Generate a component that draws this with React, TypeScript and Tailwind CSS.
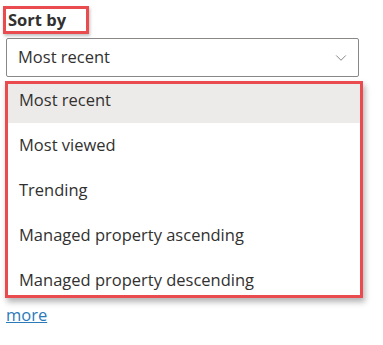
import { ChevronDown } from "lucide-react";

const options = [
  "Most recent",
  "Most viewed",
  "Trending",
  "Managed property ascending",
  "Managed property descending",
];

export default function App() {
  return (
    <div className="w-[383px] h-[345px] bg-white font-['Open_Sans',sans-serif] text-[#323130] pt-[6px] pl-[3px]">
      {/* label with annotation box */}
      <div className="w-[86px] h-[28px] border-[3px] border-[#e94b4f] shadow-[1px_2px_3px_rgba(0,0,0,0.25)] pl-[2px] flex items-center">
        <span className="text-[16.5px] font-bold leading-none text-[#323130]">Sort by</span>
      </div>

      {/* select box */}
      <div className="ml-[3px] mt-[4px] w-[353px] h-[39px] border border-[#8a8886] rounded-[2px] flex items-center justify-between pl-[11px] pr-[8px]">
        <span className="text-[16.5px]">Most recent</span>
        <ChevronDown size={18} strokeWidth={1} className="text-[#605e5c]" />
      </div>

      {/* dropdown options with annotation box */}
      <div className="ml-[2px] mt-[4px] w-[358px] h-[217px] border-[3px] border-[#e94b4f] overflow-hidden shadow-[2px_4px_6px_rgba(0,0,0,0.3)]">
        <div className="-mt-[6px] flex flex-col">
          {options.map((opt, i) => (
            <div
              key={opt}
              className={
                i === 0
                  ? "h-[45px] flex items-center pl-[11px] text-[16.5px] bg-[#edebe9]"
                  : "h-[45px] flex items-center pl-[11px] text-[16.5px]"
              }
            >
              {opt}
            </div>
          ))}
        </div>
      </div>

      <a href="#" className="ml-[3px] mt-[5px] inline-block text-[16.5px] text-[#2a7ab9] underline">
        more
      </a>
    </div>
  );
}
